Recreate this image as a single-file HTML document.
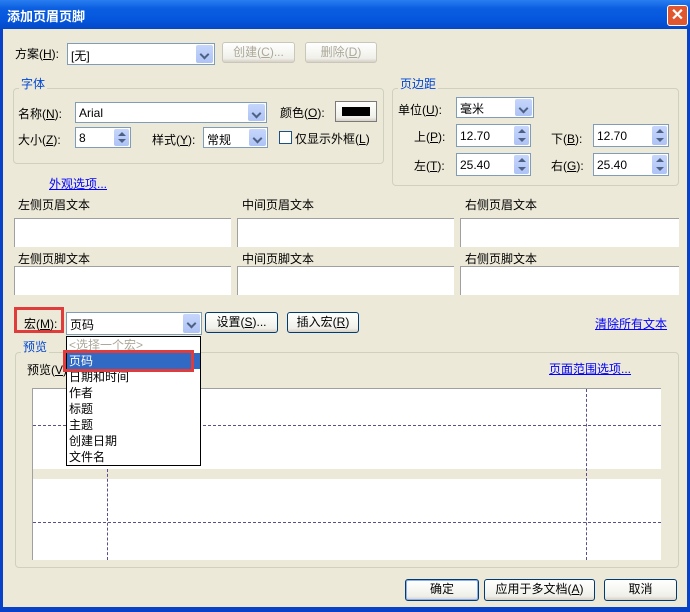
<!DOCTYPE html><html><head><meta charset="utf-8"><style>
*{margin:0;padding:0;box-sizing:border-box}
body{width:690px;height:612px;overflow:hidden;background:#0842c8;font:12px "Liberation Sans","Noto Sans CJK SC",sans-serif;color:#000;position:relative}
.a{position:absolute;white-space:nowrap}
#win{position:absolute;left:3px;top:29px;width:684px;height:578px;background:#ece9d8}
#title{position:absolute;left:0;top:0;width:690px;height:29px;background:linear-gradient(#2a7ef0,#0a5ee0 30%,#0555dc 70%,#0448c8);}
.box{position:absolute;background:#fff;border:1px solid #7f9db9}
.dd{position:absolute;right:1px;top:1px;bottom:1px;width:17px;background:linear-gradient(#c6d6fb,#aec3f5);border-radius:2px}
.dd:after{content:"";position:absolute;left:5px;top:6px;width:5px;height:5px;border-right:2px solid #4d6185;border-bottom:2px solid #4d6185;transform:rotate(45deg)}
.sp{position:absolute;right:1px;top:1px;bottom:1px;width:15px;background:linear-gradient(#c6d6fb,#aec3f5);border-radius:2px}
.sp:before{content:"";position:absolute;left:4px;top:3px;border:4px solid transparent;border-bottom:4px solid #4d6185;border-top:0}
.sp:after{content:"";position:absolute;left:4px;bottom:3px;border:4px solid transparent;border-top:4px solid #4d6185;border-bottom:0}
.btn{position:absolute;border:1px solid #003c74;border-radius:3px;background:linear-gradient(#fff,#f0f0ea 80%,#d6d0c5);text-align:center;line-height:19px}
.dis{border-color:#c9c7ba;color:#aca899}
.grp{position:absolute;border:1px solid #d0d0bf;border-radius:4px}
.lg{position:absolute;background:#ece9d8;color:#0046d5;padding:0 2px}
.lnk{position:absolute;color:#0000ff;text-decoration:underline}
.ta{position:absolute;background:#fff;border-top:1px solid #a0a0a0;border-left:1px solid #a0a0a0}
.hd{position:absolute;border-top:1px dashed #5a4e8c}
.vd{position:absolute;border-left:1px dashed #5a4e8c}
</style></head><body>
<div id="title"><span class="a" style="left:7px;top:6px;color:#fff;font-weight:bold;font-size:13px">添加页眉页脚</span>
<div class="a" style="left:667px;top:5px;width:21px;height:21px;background:#e0562f;border:1px solid #fff;border-radius:3px;color:#fff;font-size:16px;font-weight:bold;text-align:center;line-height:19px">✕</div></div>
<div id="win"></div>
<span class="a" style="left:15px;top:45px">方案(<u>H</u>):</span>
<div class="box" style="left:67px;top:43px;width:148px;height:22px"><span class="a" style="left:3px;top:3px">[无]</span><div class="dd"></div></div>
<div class="btn dis" style="left:222px;top:42px;width:73px;height:21px">创建(<u>C</u>)...</div>
<div class="btn dis" style="left:305px;top:42px;width:72px;height:21px">删除(<u>D</u>)</div>

<div class="grp" style="left:13px;top:88px;width:371px;height:76px"></div><span class="lg a" style="left:19px;top:75px">字体</span>
<span class="a" style="left:18px;top:105px">名称(<u>N</u>):</span>
<div class="box" style="left:75px;top:102px;width:192px;height:21px"><span class="a" style="left:3px;top:3px">Arial</span><div class="dd"></div></div>
<span class="a" style="left:280px;top:104px">颜色(<u>O</u>):</span>
<div class="btn" style="left:335px;top:101px;width:42px;height:21px;border-color:#7a7a7a;border-radius:0"><div class="a" style="left:6px;top:5px;width:28px;height:9px;background:#000"></div></div>
<span class="a" style="left:18px;top:131px">大小(<u>Z</u>):</span>
<div class="box" style="left:75px;top:127px;width:56px;height:21px"><span class="a" style="left:3px;top:3px">8</span><div class="sp"></div></div>
<span class="a" style="left:152px;top:131px">样式(<u>Y</u>):</span>
<div class="box" style="left:203px;top:127px;width:65px;height:21px"><span class="a" style="left:3px;top:3px">常规</span><div class="dd"></div></div>
<div class="a" style="left:279px;top:131px;width:13px;height:13px;border:1px solid #1c5180;background:#fff"></div>
<span class="a" style="left:295px;top:130px">仅显示外框(<u>L</u>)</span>

<div class="grp" style="left:392px;top:88px;width:287px;height:98px"></div><span class="lg a" style="left:398px;top:75px">页边距</span>
<span class="a" style="left:398px;top:101px">单位(<u>U</u>):</span>
<div class="box" style="left:456px;top:97px;width:78px;height:21px"><span class="a" style="left:3px;top:2px">毫米</span><div class="dd"></div></div>
<span class="a" style="left:414px;top:128px">上(<u>P</u>):</span>
<div class="box" style="left:456px;top:124px;width:75px;height:23px"><span class="a" style="left:3px;top:4px">12.70</span><div class="sp"></div></div>
<span class="a" style="left:551px;top:130px">下(<u>B</u>):</span>
<div class="box" style="left:593px;top:124px;width:76px;height:23px"><span class="a" style="left:3px;top:4px">12.70</span><div class="sp"></div></div>
<span class="a" style="left:414px;top:157px">左(<u>T</u>):</span>
<div class="box" style="left:456px;top:153px;width:75px;height:23px"><span class="a" style="left:3px;top:4px">25.40</span><div class="sp"></div></div>
<span class="a" style="left:551px;top:157px">右(<u>G</u>):</span>
<div class="box" style="left:593px;top:153px;width:76px;height:23px"><span class="a" style="left:3px;top:4px">25.40</span><div class="sp"></div></div>

<span class="lnk" style="left:49px;top:175px">外观选项...</span>
<span class="a" style="left:18px;top:196px">左侧页眉文本</span><span class="a" style="left:242px;top:196px">中间页眉文本</span><span class="a" style="left:465px;top:196px">右侧页眉文本</span>
<div class="ta" style="left:14px;top:218px;width:217px;height:29px"></div><div class="ta" style="left:237px;top:218px;width:217px;height:29px"></div><div class="ta" style="left:460px;top:218px;width:219px;height:29px"></div>
<span class="a" style="left:18px;top:250px">左侧页脚文本</span><span class="a" style="left:242px;top:250px">中间页脚文本</span><span class="a" style="left:465px;top:250px">右侧页脚文本</span>
<div class="ta" style="left:14px;top:266px;width:217px;height:29px"></div><div class="ta" style="left:237px;top:266px;width:217px;height:29px"></div><div class="ta" style="left:460px;top:266px;width:219px;height:29px"></div>

<div class="grp" style="left:15px;top:352px;width:664px;height:216px"></div><span class="lg a" style="left:21px;top:338px">预览</span>
<span class="a" style="left:27px;top:361px">预览(<u>V</u>)</span>
<span class="lnk" style="left:549px;top:360px">页面范围选项...</span>
<div class="a" style="left:32px;top:388px;width:629px;height:172px;background:#fff;border-top:1px solid #a0a0a0;border-left:1px solid #a0a0a0"></div>
<div class="a" style="left:33px;top:469px;width:628px;height:10px;background:#ece9d8"></div>
<div class="hd" style="left:33px;top:425px;width:628px"></div>
<div class="hd" style="left:33px;top:522px;width:628px"></div>
<div class="vd" style="left:107px;top:469px;height:91px"></div>
<div class="vd" style="left:586px;top:389px;height:171px"></div>

<div class="a" style="left:14px;top:307px;width:50px;height:26px;border:3px solid #e03c3c"></div>
<span class="a" style="left:24px;top:315px">宏(<u>M</u>):</span>
<div class="box" style="left:66px;top:312px;width:136px;height:23px"><span class="a" style="left:3px;top:3px">页码</span><div class="dd"></div></div>
<div class="btn" style="left:205px;top:312px;width:73px;height:21px">设置(<u>S</u>)...</div>
<div class="btn" style="left:287px;top:312px;width:72px;height:21px">插入宏(<u>R</u>)</div>
<span class="lnk" style="left:595px;top:315px">清除所有文本</span>

<div class="a" style="left:66px;top:336px;width:135px;height:130px;background:#fff;border:1px solid #000">
<div class="a" style="left:2px;top:0;color:#aca899;line-height:16px">&lt;选择一个宏&gt;</div>
<div class="a" style="left:0;top:16px;width:133px;height:16px;background:#316ac5;color:#fff;line-height:16px;padding-left:2px">页码</div>
<div class="a" style="left:2px;top:32px;line-height:16px">日期和时间<br>作者<br>标题<br>主题<br>创建日期<br>文件名</div></div>
<div class="a" style="left:63px;top:350px;width:131px;height:22px;border:3px solid #e03c3c"></div>

<div class="btn" style="left:405px;top:579px;width:74px;height:22px;box-shadow:inset 0 0 0 1px #8aaef0">确定</div>
<div class="btn" style="left:484px;top:579px;width:111px;height:22px">应用于多文档(<u>A</u>)</div>
<div class="btn" style="left:604px;top:579px;width:73px;height:22px">取消</div>
</body></html>
